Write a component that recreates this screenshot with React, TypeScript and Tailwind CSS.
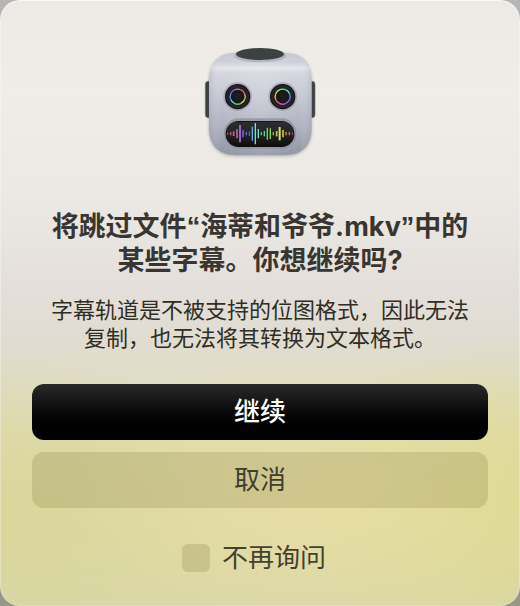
import { useState } from 'react';

// x, half height, stroke width, colour
const bars: [number, number, number, string][] = [
  [113, 3, 3, '#e0647c'],
  [122, 5, 4, '#c85f80'],
  [131, 7, 5, '#c4629a'],
  [141, 14, 5, '#b562a8'],
  [150, 26, 6, '#9467c4'],
  [159, 11, 5, '#7063b8'],
  [169, 5, 4, '#5f6fd0'],
  [178, 7, 3, '#5580c4'],
  [187, 21, 4, '#62b0dc'],
  [196, 32, 4, '#74dbe8'],
  [205, 14, 4, '#6fe0c8'],
  [214, 5, 4, '#58c08c'],
  [223, 8, 4, '#62d088'],
  [232, 18, 4, '#68dc70'],
  [241, 16, 4, '#84dc5c'],
  [250, 5, 4, '#8cc450'],
  [260, 8, 5, '#b4d054'],
  [269, 20, 6, '#dce060'],
  [279, 11, 5, '#d4c050'],
  [288, 5, 4, '#cc9448'],
  [298, 5, 4, '#cc7848'],
  [307, 3, 3, '#e05c4c'],
];

const leftRing = ['#e55fe0', '#e85f8c', '#f0b860', '#c8f070', '#6fe878', '#62e0d8', '#5c8cf0', '#8c60e8'];
const rightRing = ['#70f088', '#66e8d0', '#6090f0', '#9c60f0', '#e860d8', '#f06080', '#f0c060', '#c0f068'];

function Eye({ cx, colors }: { cx: number; colors: string[] }) {
  return (
    <g transform={`translate(${cx} 185)`}>
      <circle r="43" fill="#a0a2b1" opacity="0.75" />
      <circle r="38" fill="#141416" />
      <circle r="34" fill="url(#eye)" />
      {colors.map((color, i) => (
        <path
          key={color}
          d="M-8.6 -20.8 A22.5 22.5 0 0 1 8.6 -20.8"
          transform={`rotate(${i * 45})`}
          fill="none"
          stroke={color}
          strokeWidth="4"
        />
      ))}
    </g>
  );
}

function RobotIcon() {
  return (
    <svg viewBox="0 0 420 405" className="w-[140px]" aria-hidden="true">
      <defs>
        <linearGradient id="head" x1="0" y1="0" x2="0" y2="1">
          <stop offset="0" stopColor="#c5c7d2" />
          <stop offset="0.09" stopColor="#cdcfd9" />
          <stop offset="0.15" stopColor="#e4e5ea" />
          <stop offset="0.2" stopColor="#d5d6df" />
          <stop offset="0.45" stopColor="#c4c6d2" />
          <stop offset="0.75" stopColor="#acafbd" />
          <stop offset="1" stopColor="#9194a2" />
        </linearGradient>
        <linearGradient id="sides" x1="0" y1="0" x2="1" y2="0">
          <stop offset="0" stopColor="#8c90a0" stopOpacity="0.25" />
          <stop offset="0.12" stopColor="#ffffff" stopOpacity="0" />
          <stop offset="0.5" stopColor="#ffffff" stopOpacity="0.14" />
          <stop offset="0.88" stopColor="#ffffff" stopOpacity="0" />
          <stop offset="1" stopColor="#8c90a0" stopOpacity="0.25" />
        </linearGradient>
        <linearGradient id="mouth" x1="0" y1="0" x2="0" y2="1">
          <stop offset="0" stopColor="#2d2d2f" />
          <stop offset="0.5" stopColor="#252527" />
          <stop offset="1" stopColor="#101011" />
        </linearGradient>
        <radialGradient id="eye">
          <stop offset="0" stopColor="#202022" />
          <stop offset="0.55" stopColor="#171719" />
          <stop offset="1" stopColor="#29292b" />
        </radialGradient>
        <pattern id="mesh" width="8" height="8" patternUnits="userSpaceOnUse">
          <rect width="8" height="8" fill="#424748" />
          <circle cx="2" cy="2" r="2" fill="#303536" />
          <circle cx="6" cy="6" r="2" fill="#303536" />
        </pattern>
        <filter id="shadow" x="-10%" y="-10%" width="120%" height="125%">
          <feDropShadow dx="0" dy="4" stdDeviation="4" floodColor="#55535a" floodOpacity="0.4" />
        </filter>
      </defs>
      <rect x="46" y="139" width="30" height="109" rx="9" fill="url(#mesh)" stroke="#6a6e70" strokeWidth="2" />
      <rect x="345" y="139" width="30" height="109" rx="9" fill="url(#mesh)" stroke="#6a6e70" strokeWidth="2" />
      <path
        d="M137 53 H285 C336 53 365 82 365 133 V280 C365 331 336 360 285 360 H137 C86 360 57 331 57 280 V133 C57 82 86 53 137 53 Z"
        fill="url(#head)"
        filter="url(#shadow)"
      />
      <path
        d="M137 53 H285 C336 53 365 82 365 133 V280 C365 331 336 360 285 360 H137 C86 360 57 331 57 280 V133 C57 82 86 53 137 53 Z"
        fill="url(#sides)"
      />
      <ellipse cx="210" cy="62" rx="79" ry="20" fill="#b3b5c2" />
      <ellipse cx="210" cy="57" rx="72" ry="18" fill="url(#mesh)" />
      <Eye cx={143} colors={leftRing} />
      <Eye cx={278} colors={rightRing} />
      <rect x="102" y="250" width="217" height="91" rx="45" fill="#858896" opacity="0.65" />
      <rect x="107" y="258" width="206" height="78" rx="39" fill="#0d0d0e" />
      <rect x="109" y="260" width="202" height="71" rx="35" fill="url(#mouth)" />
      {bars.map(([x, half, width, color]) => (
        <line key={x} x1={x} x2={x} y1={296 - half} y2={296 + half} stroke={color} strokeWidth={width} />
      ))}
    </svg>
  );
}

export default function App() {
  const [dontAsk, setDontAsk] = useState(false);

  return (
    <div className="min-h-screen flex bg-linear-to-b from-[#b5b5b5] to-[#96978a] font-['Inter','Noto_Sans_CJK_SC',sans-serif]">
      <main
        role="alertdialog"
        aria-labelledby="title"
        aria-describedby="message"
        className="flex-1 flex flex-col items-center rounded-[20px] border border-t-[#f8f7f5] border-x-white/30 border-b-white/20 px-[31px] pt-[34px] pb-6 bg-[radial-gradient(50%_24%_at_64%_82%,#eadfa6b3,#eadfa600),radial-gradient(45%_26%_at_100%_82%,#dcd98bcc,#dcd98b00),radial-gradient(45%_26%_at_0%_84%,#d6d598b3,#d6d59800),linear-gradient(180deg,#edeae6_0%,#f0ede8_15%,#ece9e5_32%,#e4dfdb_47%,#e0dcd0_57%,#e1dcc4_64%,#e0dbac_74%,#dfdaa2_86%,#d9d7a8_100%)] bg-origin-border"
      >
        <RobotIcon />
        <h1 id="title" className="mt-10 text-center text-[27px] leading-[34px] font-bold text-[#393530]">
          将跳过文件<span className="font-['Liberation_Sans',sans-serif]">“</span>海蒂和爷爷.mkv
          <span className="font-['Liberation_Sans',sans-serif]">”</span>中的
          <br />
          某些字幕。你想继续吗?
        </h1>
        <p id="message" className="mt-[18px] text-center text-[22px] leading-7 text-[#302d23]">
          字幕轨道是不被支持的位图格式，因此无法
          <br />
          复制，也无法将其转换为文本格式。
        </p>
        <div className="mt-8 w-full flex flex-col gap-3">
          <button
            type="button"
            className="h-14 rounded-xl bg-linear-to-b from-[#2a2a2a] to-black pb-0.5 text-[26px] font-medium text-white"
          >
            继续
          </button>
          <button type="button" className="h-14 rounded-xl bg-[#4c4000]/15 pb-0.5 text-[26px] text-[#3f3d2c]">
            取消
          </button>
        </div>
        <label className="mt-[30px] mr-3 flex items-center gap-3 text-[26px] leading-10 text-[#434130]">
          <input
            type="checkbox"
            checked={dontAsk}
            onChange={(e) => setDontAsk(e.target.checked)}
            className="size-7 appearance-none rounded-md bg-[#4c4000]/15 checked:bg-[#2a2a2a]"
          />
          不再询问
        </label>
      </main>
    </div>
  );
}
